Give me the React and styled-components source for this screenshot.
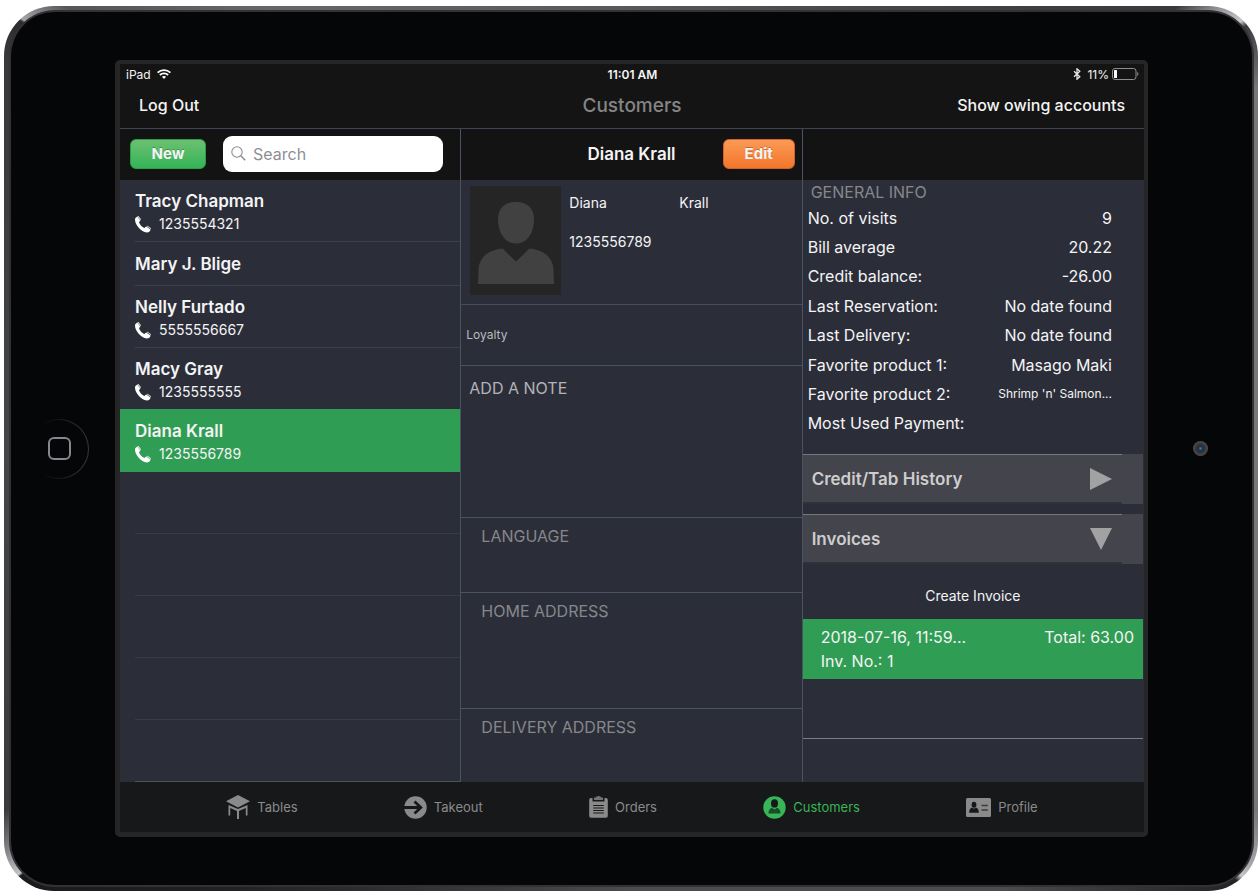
import { useState } from 'react';
import styled, { createGlobalStyle, css } from 'styled-components';

const customers = [
  { id: 1, name: 'Tracy Chapman', phone: '1235554321' },
  { id: 2, name: 'Mary J. Blige' },
  { id: 3, name: 'Nelly Furtado', phone: '5555556667' },
  { id: 4, name: 'Macy Gray', phone: '1235555555' },
  { id: 5, name: 'Diana Krall', phone: '1235556789' },
];

const emptyRows = [1, 2, 3, 4, 5];

const generalInfo = [
  { label: 'No. of visits', value: '9' },
  { label: 'Bill average', value: '20.22' },
  { label: 'Credit balance:', value: '-26.00' },
  { label: 'Last Reservation:', value: 'No date found' },
  { label: 'Last Delivery:', value: 'No date found' },
  { label: 'Favorite product 1:', value: 'Masago Maki' },
  { label: 'Favorite product 2:', value: "Shrimp 'n' Salmon...", small: true },
  { label: 'Most Used Payment:', value: '' },
];

const WifiIcon = () => (
  <svg width="14" height="10" viewBox="0 0 14 10" fill="none" stroke="#fff" strokeWidth="1.8">
    <path d="M0.6 3.7 C4.2 0.2 9.8 0.2 13.4 3.7" />
    <path d="M2.9 6 C5.2 3.8 8.8 3.8 11.1 6" />
    <path d="M7 9.9 L4.9 7.8 C6.1 6.8 7.9 6.8 9.1 7.8 Z" fill="#fff" stroke="none" />
  </svg>
);

const BluetoothIcon = () => (
  <svg width="8" height="12" viewBox="0 0 8 12" fill="none" stroke="#e8e8e8" strokeWidth="1.3">
    <path d="M1 3.3 L6.8 8.7 L4 11.2 V0.8 L6.8 3.3 L1 8.7" />
  </svg>
);

const BatteryIcon = () => (
  <svg width="27" height="12" viewBox="0 0 27 12">
    <rect x="0.5" y="0.5" width="23.5" height="11" rx="2.5" fill="none" stroke="#8e8e8e" />
    <rect x="2" y="2" width="3" height="8" rx="0.5" fill="#fff" />
    <path d="M25.2 4 C26.8 4.6 26.8 7.4 25.2 8 Z" fill="#8e8e8e" />
  </svg>
);

const SearchIcon = () => (
  <svg width="15" height="15" viewBox="0 0 15 15" fill="none" stroke="#8e8e93">
    <circle cx="6" cy="6" r="5.2" strokeWidth="1.1" />
    <path d="M9.8 9.8 L14.2 14.2" strokeWidth="1.6" />
  </svg>
);

const PhoneIcon = () => (
  <svg width="16" height="17" viewBox="0 0 16 17" fill="#fff">
    <path d="M0.2 2.2 L2.2 0.4 L5.4 4.4 L4 6.2 C4.8 8.6 7 11 9.3 12 L11.2 10.5 L15.6 13.4 C15.2 15 13.6 16.6 11.8 16.5 C6 15.6 0 9 0 3.4 Z" />
    <path d="M2.4 0.2 L3.4 0 L6 3.3 L5.6 4.1 Z" />
    <path d="M11.6 10.1 L12.4 9.8 L16 12.2 L15.9 13 Z" />
  </svg>
);

const AvatarIcon = () => (
  <svg width="91" height="109" viewBox="0 0 91 109" fill="#414141">
    <path d="M46 16 C57 16 64 22 64 33 C64 47 57 57.500 46 57.500 C35 57.500 28 47 28 33 C28 22 35 16 46 16 Z" />
    <path d="M32.500 62.500 L46 75.500 L59.500 62.500 C75 64 83.500 73 83.500 84 L84 98 H8 L8.500 84 C8.500 73 17 64 32.500 62.500 Z" />
  </svg>
);

const TablesIcon = () => (
  <svg width="24" height="24" viewBox="0 0 24 24" fill="#8a8a8a">
    <path d="M12 0 L24 6.200 L12 12.400 L0 6.200 Z" />
    <path d="M2.500 10 L12 14 L21.500 10 V20.500 H19.800 V13 L13 16 V24 H11 V16 L4.200 13 V20.500 H2.500 Z" />
  </svg>
);

const TakeoutIcon = () => (
  <svg width="23" height="23" viewBox="0 0 23 23">
    <circle cx="11.5" cy="11.5" r="11.2" fill="#8a8a8a" />
    <path d="M0 11.500 H16.500 M10.500 5.500 L16.800 11.500 L10.500 17.500" fill="none" stroke="#17181a" strokeWidth="2.800" />
  </svg>
);

const OrdersIcon = () => (
  <svg width="19" height="22" viewBox="0 0 19 22">
    <path d="M2 2 H3.500 V5.500 H15.500 V2 H17 Q18.800 2 18.800 4 V20 Q18.800 21.800 17 21.800 H2 Q0.200 21.800 0.200 20 V4 Q0.200 2 2 2 Z" fill="#8a8a8a" />
    <path d="M5 1.500 H6.800 Q7 0 9.500 0 Q12 0 12.200 1.500 H14 V4 H5 Z" fill="#747474" />
    <path d="M4.200 9.500 H14.800 M4.200 12 H14.800 M4.200 14.500 H14.800 M4.200 17 H14.800" stroke="#17181a" strokeWidth="1.200" />
  </svg>
);

const CustomersIcon = () => (
  <svg width="23" height="23" viewBox="0 0 23 23">
    <circle cx="11.5" cy="11.5" r="11.2" fill="#37b557" />
    <ellipse cx="11.5" cy="7.400" rx="3.500" ry="4.200" fill="#17181a" />
    <path d="M9 11.800 Q11.500 14.500 14 11.800 Q17.500 12.800 17.500 17.500 H5.500 Q5.500 12.800 9 11.800 Z" fill="#1a4d2a" />
  </svg>
);

const ProfileIcon = () => (
  <svg width="25" height="19" viewBox="0 0 25 19">
    <rect width="25" height="19" rx="1.500" fill="#8a8a8a" />
    <ellipse cx="8" cy="6.800" rx="2.400" ry="3" fill="#17181a" />
    <path d="M6 9.500 Q8 11.500 10 9.500 Q12.800 10.500 12.800 14.800 H3.200 Q3.200 10.500 6 9.500 Z" fill="#17181a" />
    <path d="M15.500 7.500 H21.800 M15.500 12 H21.800" stroke="#3a3b3d" strokeWidth="1.700" />
  </svg>
);

const Triangle = ({ open }) => (
  <svg width="22" height="22" viewBox="0 0 22 22" fill="#a2a2a2">
    <path d={open ? 'M0 0 H22 L11 22 Z' : 'M0 0 L22 11 L0 22 Z'} />
  </svg>
);

const tabs = [
  { label: 'Tables', Icon: TablesIcon },
  { label: 'Takeout', Icon: TakeoutIcon },
  { label: 'Orders', Icon: OrdersIcon },
  { label: 'Customers', Icon: CustomersIcon },
  { label: 'Profile', Icon: ProfileIcon },
];

const App = () => {
  const [selectedId, setSelectedId] = useState(5);
  const [creditOpen, setCreditOpen] = useState(false);
  const [invoicesOpen, setInvoicesOpen] = useState(true);
  const [activeTab, setActiveTab] = useState('Customers');

  return (
    <>
      <GlobalStyle />
      <Page>
        <Device>
          <Glass>
            <Bezel>
              <HomeButton type="button" aria-label="Home">
                <HomeSquare />
              </HomeButton>
            </Bezel>
            <Screen>
              <StatusBar>
                <StatusGroup>
                  iPad <WifiIcon />
                </StatusGroup>
                <Clock>11:01 AM</Clock>
                <StatusGroup $end>
                  <BluetoothIcon />
                  <Battery>
                    11% <BatteryIcon />
                  </Battery>
                </StatusGroup>
              </StatusBar>
              <NavBar>
                <NavButton type="button">Log Out</NavButton>
                <NavTitle>Customers</NavTitle>
                <NavButton type="button" $end>
                  Show owing accounts
                </NavButton>
              </NavBar>

              <Columns>
                <Column>
                  <ColumnHeader>
                    <NewButton type="button">New</NewButton>
                    <SearchBox>
                      <SearchIcon />
                      <SearchInput type="text" placeholder="Search" aria-label="Search" />
                    </SearchBox>
                  </ColumnHeader>
                  <CustomerList>
                    {customers.map((customer) => (
                      <li key={customer.id}>
                        <CustomerRow
                          type="button"
                          $selected={customer.id === selectedId}
                          onClick={() => setSelectedId(customer.id)}
                        >
                          <CustomerText $short={!customer.phone} $selected={customer.id === selectedId}>
                            <CustomerName>{customer.name}</CustomerName>
                            {customer.phone && (
                              <CustomerPhone>
                                <PhoneIcon />
                                {customer.phone}
                              </CustomerPhone>
                            )}
                          </CustomerText>
                        </CustomerRow>
                      </li>
                    ))}
                    {emptyRows.map((row) => (
                      <EmptyRow key={row} />
                    ))}
                  </CustomerList>
                </Column>

                <Column>
                  <ColumnHeader $titled>
                    <ColumnTitle>Diana Krall</ColumnTitle>
                    <EditButton type="button">Edit</EditButton>
                  </ColumnHeader>
                  <Profile>
                    <Photo>
                      <AvatarIcon />
                    </Photo>
                    <Contact>
                      <span>Diana</span>
                      <span>Krall</span>
                      <span>1235556789</span>
                    </Contact>
                  </Profile>
                  <Loyalty>Loyalty</Loyalty>
                  <Section $height={152} $bright>
                    ADD A NOTE
                  </Section>
                  <Section $height={75}>LANGUAGE</Section>
                  <Section $height={116}>HOME ADDRESS</Section>
                  <Section $height={73}>DELIVERY ADDRESS</Section>
                </Column>

                <Column>
                  <ColumnHeader />
                  <InfoTitle>GENERAL INFO</InfoTitle>
                  <InfoList>
                    {generalInfo.map((info) => (
                      <InfoRow key={info.label}>
                        <dt>{info.label}</dt>
                        <InfoValue $small={info.small}>{info.value}</InfoValue>
                      </InfoRow>
                    ))}
                  </InfoList>
                  <Accordion type="button" onClick={() => setCreditOpen(!creditOpen)}>
                    <AccordionLabel>
                      Credit/Tab History
                      <Triangle open={creditOpen} />
                    </AccordionLabel>
                  </Accordion>
                  <Accordion type="button" onClick={() => setInvoicesOpen(!invoicesOpen)}>
                    <AccordionLabel>
                      Invoices
                      <Triangle open={invoicesOpen} />
                    </AccordionLabel>
                  </Accordion>
                  {invoicesOpen && (
                    <Invoices>
                      <CreateInvoice type="button">Create Invoice</CreateInvoice>
                      <InvoiceRow>
                        <div>
                          <p>2018-07-16, 11:59...</p>
                          <p>Inv. No.: 1</p>
                        </div>
                        <p>Total: 63.00</p>
                      </InvoiceRow>
                      <InvoiceSpace />
                    </Invoices>
                  )}
                </Column>
              </Columns>

              <TabBar>
                {tabs.map(({ label, Icon }) => (
                  <Tab
                    key={label}
                    href={`#${label.toLowerCase()}`}
                    $active={label === activeTab}
                    onClick={() => setActiveTab(label)}
                  >
                    <Icon />
                    {label}
                  </Tab>
                ))}
              </TabBar>
            </Screen>
            <Bezel>
              <Camera />
            </Bezel>
          </Glass>
        </Device>
      </Page>
    </>
  );
};

const GlobalStyle = createGlobalStyle`
  * {
    box-sizing: border-box;
  }

  body {
    margin: 0;
    background: #fff;
    font-family: Inter, 'Liberation Sans', sans-serif;
    color: #f4f4f5;
  }

  button,
  input {
    font-family: inherit;
    color: inherit;
  }

  button {
    border: none;
    background: none;
    padding: 0;
    cursor: pointer;
  }

  p,
  h1,
  h2,
  h3,
  ul,
  dl,
  dd {
    margin: 0;
    padding: 0;
  }

  ul {
    list-style: none;
  }

  svg {
    display: block;
    flex-shrink: 0;
  }
`;

const Page = styled.main`
  padding: 6px 2px 4px 4px;
`;

/* metal edge, with a glint on each corner */
const Device = styled.div`
  padding: 6px 6px 6px 7px;
  border-radius: 50px;
  background: conic-gradient(
    #58585b 0deg,
    #3a3a3d 51deg,
    #8f8c92 53deg,
    #c9c7cc 55deg,
    #3b3b3e 55.500deg,
    #77747a 60deg,
    #77747a 120deg,
    #a9a7ad 124deg,
    #c9c7cc 125deg,
    #232326 125.500deg,
    #4c4c50 140deg,
    #4c4c50 180deg,
    #1f1f23 225deg,
    #1a1a1d 235deg,
    #c4c4c8 235.200deg,
    #8a8a8e 237deg,
    #3a3a3d 240deg,
    #45464a 270deg,
    #38383b 302deg,
    #2c2c2f 305deg,
    #a5a5a8 305.200deg,
    #55555a 308deg,
    #66666a 320deg,
    #58585b 360deg
  );
`;

const Glass = styled.div`
  display: flex;
  padding: 48px 0;
  border-radius: 44px;
  background: #050608;
  box-shadow: 0 0 0 2px #323235;
`;

const Bezel = styled.div`
  flex: 0 0 104px;
  display: flex;
  align-items: center;
  justify-content: center;
`;

const HomeButton = styled.button`
  width: 60px;
  height: 60px;
  margin-right: 8px;
  border-radius: 50%;
  display: flex;
  align-items: center;
  justify-content: center;
  border: 1px solid transparent;
  background:
    linear-gradient(#050608, #050608) padding-box,
    linear-gradient(to right, #050608 20%, #3a3837) border-box;
`;

const HomeSquare = styled.span`
  width: 23px;
  height: 23px;
  border: 2px solid #85888c;
  border-radius: 6px;
`;

const Camera = styled.div`
  width: 15px;
  height: 15px;
  border-radius: 50%;
  background: radial-gradient(circle at 50% 50%, #3f7cb5 0, #173a5c 2px, #2a2d31 3px, #3b3b3b 5px, #4a4a4a 7px);
`;

const Screen = styled.div`
  flex: 1;
  min-width: 0;
  display: flex;
  flex-direction: column;
  border: solid #262626;
  border-width: 4px 4px 5px 5px;
  border-radius: 5px;
  background: #2b2e39;
`;

const StatusBar = styled.div`
  display: grid;
  grid-template-columns: 1fr auto 1fr;
  align-items: center;
  height: 20px;
  padding: 0 5px 0 6px;
  background: #141414;
  font-size: 12px;
`;

const StatusGroup = styled.div`
  display: flex;
  align-items: center;
  gap: 6px;
  justify-content: ${(props) => (props.$end ? 'flex-end' : 'flex-start')};
`;

const Battery = styled.span`
  display: flex;
  align-items: center;
  gap: 3px;
`;

const Clock = styled.span`
  font-weight: 600;
`;

const NavBar = styled.header`
  display: grid;
  grid-template-columns: 1fr auto 1fr;
  align-items: center;
  height: 45px;
  padding: 0 19px 2px;
  background: #141414;
  border-bottom: 1px solid #3d4552;
`;

const NavButton = styled.button`
  justify-self: ${(props) => (props.$end ? 'end' : 'start')};
  font-size: 16px;
  line-height: 20px;
  font-weight: 500;
`;

const NavTitle = styled.h1`
  font-size: 19px;
  font-weight: 500;
  color: #858585;
`;

const Columns = styled.div`
  display: grid;
  grid-template-columns: repeat(3, minmax(0, 1fr));
`;

const Column = styled.section`
  display: flex;
  flex-direction: column;

  &:not(:last-child) {
    border-right: 1px solid #4b5361;
  }
`;

const ColumnHeader = styled.div`
  display: flex;
  align-items: center;
  gap: 17px;
  height: 51px;
  padding: 0 17px 2px 10px;
  background: #131313;
  ${(props) =>
    props.$titled &&
    css`
      display: grid;
      grid-template-columns: 1fr auto 1fr;
      padding: 0 7px 2px;
      gap: 0;
    `}
`;

const glossy = css`
  height: 30px;
  border-radius: 6px;
  font-size: 15px;
  font-weight: 700;
  text-shadow: 0 -1px 0 rgba(0, 0, 0, 0.25);
`;

const NewButton = styled.button`
  ${glossy}
  width: 76px;
  background: linear-gradient(#6cc072, #34b457);
  border: 1px solid #2a9f4a;
`;

const EditButton = styled.button`
  ${glossy}
  width: 72px;
  justify-self: end;
  background: linear-gradient(#fb9a55, #f3762b);
  border: 1px solid #d2622a;
`;

const SearchBox = styled.label`
  flex: 1;
  min-width: 0;
  display: flex;
  align-items: center;
  gap: 7px;
  height: 36px;
  padding: 0 8px;
  border-radius: 9px;
  background: #fff;
`;

const SearchInput = styled.input`
  flex: 1;
  min-width: 0;
  padding: 0;
  border: none;
  outline: none;
  background: none;
  font-size: 16px;
  color: #222;

  &::placeholder {
    color: #8e8e93;
    opacity: 1;
  }
`;

const ColumnTitle = styled.h2`
  grid-column: 2;
  font-size: 17px;
  font-weight: 600;
`;

const CustomerList = styled.ul`
  display: flex;
  flex-direction: column;
`;

const CustomerRow = styled.button`
  display: block;
  width: 100%;
  padding-left: 15px;
  text-align: left;
  ${(props) =>
    props.$selected &&
    css`
      background: #309d54;
      box-shadow: 0 -1px 0 #309d54;
    `}
`;

const CustomerText = styled.span`
  display: flex;
  flex-direction: column;
  justify-content: center;
  gap: 2px;
  height: ${(props) => (props.$short ? '44px' : '62px')};
  padding-top: ${(props) => (props.$short ? '0' : '3px')};
  border-bottom: 1px solid ${(props) => (props.$selected ? '#309d54' : '#3b404c')};
`;

const CustomerName = styled.span`
  font-size: 17px;
  line-height: 22px;
  font-weight: 600;
`;

const CustomerPhone = styled.span`
  display: flex;
  align-items: center;
  gap: 8px;
  font-size: 14px;
  line-height: 20px;
`;

const EmptyRow = styled.li`
  height: 62px;
  margin-left: 15px;
  border-bottom: 1px solid #373b47;

  &:last-child {
    border-color: #4b5361;
  }
`;

const Profile = styled.div`
  display: flex;
  gap: 8px;
  height: 125px;
  padding: 6px 9px;
  border-bottom: 1px solid #464c59;
`;

const Photo = styled.div`
  width: 91px;
  height: 109px;
  background: #252525;
`;

const Contact = styled.div`
  flex: 1;
  display: grid;
  grid-template-columns: 110px 1fr;
  grid-auto-rows: 39px;
  align-content: start;
  font-size: 14px;
  line-height: 34px;
`;

const Loyalty = styled.div`
  height: 61px;
  padding: 0 5px;
  font-size: 12px;
  line-height: 60px;
  color: #b9babd;
  border-bottom: 1px solid #4b5361;
`;

const Section = styled.h3`
  min-height: ${(props) => props.$height}px;
  padding: ${(props) => (props.$bright ? '12px 8px' : '8px 20px')};
  font-size: 16px;
  line-height: 20px;
  font-weight: 400;
  color: ${(props) => (props.$bright ? '#b4b4b6' : '#86878b')};

  &:not(:last-child) {
    border-bottom: 1px solid #4b5361;
  }
`;

const InfoTitle = styled.h2`
  padding: 1px 8px 0;
  font-size: 16px;
  line-height: 22px;
  font-weight: 400;
  color: #86878b;
`;

const InfoList = styled.dl`
  display: grid;
  grid-auto-rows: 1fr;
  height: 235px;
  margin-bottom: 16px;
  padding: 0 32px 0 5px;
  font-size: 16px;
`;

const InfoRow = styled.div`
  display: flex;
  align-items: center;
  justify-content: space-between;
`;

const InfoValue = styled.dd`
  font-size: ${(props) => (props.$small ? '12px' : '16px')};
`;

const Accordion = styled.button`
  display: block;
  height: 50px;
  margin: 0 1px 10px 0;
  padding-right: 21px;
  background: #43444c;

  & + & {
    margin-bottom: 0;
  }
`;

const AccordionLabel = styled.span`
  display: flex;
  align-items: center;
  justify-content: space-between;
  height: 50px;
  padding: 0 10px 0 9px;
  border-top: 1px solid #77787d;
  border-bottom: 2px solid #2f313b;
  font-size: 17px;
  font-weight: 600;
  color: #cdcdcd;
`;

const Invoices = styled.div`
  margin-right: 1px;
  display: flex;
  flex-direction: column;
`;

const CreateInvoice = styled.button`
  height: 55px;
  padding-top: 8px;
  font-size: 14px;
`;

const InvoiceRow = styled.div`
  display: flex;
  justify-content: space-between;
  height: 60px;
  padding: 6px 9px 6px 18px;
  background: #309d54;
  font-size: 16px;
  line-height: 24px;
`;

const InvoiceSpace = styled.div`
  height: 60px;
  border-bottom: 1px solid #7b7d85;
`;

const TabBar = styled.nav`
  display: flex;
  align-items: center;
  justify-content: space-evenly;
  height: 50px;
  background: #17181a;
`;

const Tab = styled.a`
  display: flex;
  align-items: center;
  gap: 7px;
  font-size: 13px;
  text-decoration: none;
  color: ${(props) => (props.$active ? '#37b557' : '#8a8a8a')};
`;

export default App;
